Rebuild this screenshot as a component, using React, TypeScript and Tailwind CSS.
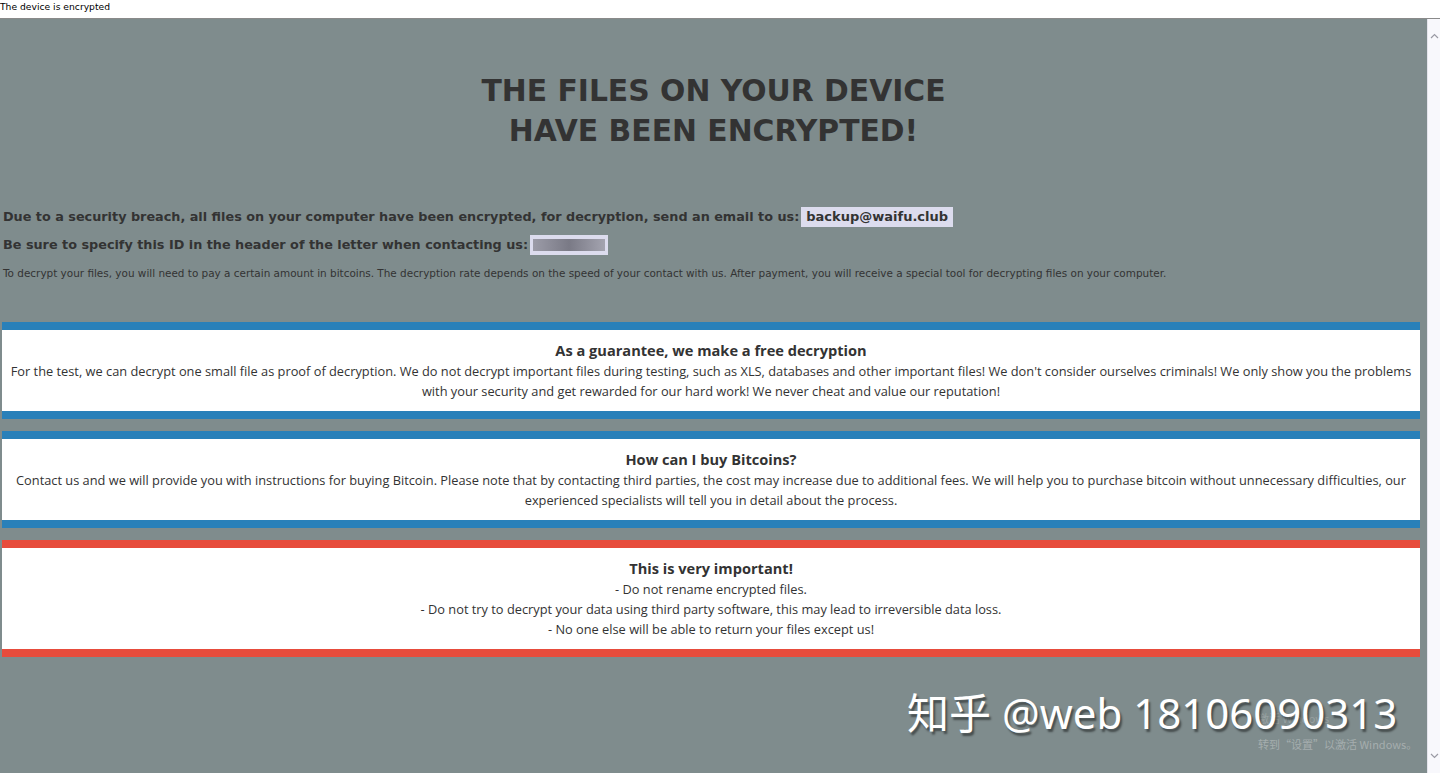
import React from 'react';

const tahoma = { fontFamily: '"DejaVu Sans", Verdana, sans-serif' };
const body = { fontFamily: '"Open Sans", "Noto Sans", sans-serif' };

function Box({ color, title, children }: { color: 'blue' | 'red'; title: string; children: React.ReactNode }) {
  const border = color === 'blue' ? 'border-[#2980b9]' : 'border-[#e74c3c]';
  return (
    <div className={`mx-[2px] w-[1418px] border-y-8 ${border} bg-white pt-[9px] pb-[10px] text-center text-[#333]`} style={body}>
      <div className="text-[14.6px] font-bold leading-[22px]">{title}</div>
      <div className="text-[12.8px] leading-[20px]">{children}</div>
    </div>
  );
}

export default function App() {
  return (
    <div className="h-[775px] w-[1440px] overflow-hidden bg-white" style={tahoma}>
      {/* title bar */}
      <div className="h-[19px] border-b border-[#8a8a8a] text-[9.2px] leading-[14px] text-black">The device is encrypted</div>

      <div className="flex h-[754px]">
        <div className="relative flex w-[1427px] flex-col bg-[#7f8c8d] text-[#333]">
          <h1 className="mt-[52px] text-center text-[29.8px] font-bold leading-[40px]">
            THE FILES ON YOUR DEVICE
            <br />
            HAVE BEEN ENCRYPTED!
          </h1>

          <div className="mt-[52px] pl-[3px]">
            <div className="flex items-center text-[12.8px] font-bold leading-[28px]">
              <span>Due to a security breach, all files on your computer have been encrypted, for decryption, send an email to us:</span>
              <span className="ml-[2px] bg-[#dcdcee] px-[5px] text-[13px] leading-[20px]">backup@waifu.club</span>
            </div>
            <div className="flex items-center text-[12.8px] font-bold leading-[28px]">
              <span>Be sure to specify this ID in the header of the letter when contacting us:</span>
              <span className="ml-[2px] flex h-[20px] w-[78px] items-center bg-[#dcdcee] px-[3px]">
                <span className="h-[12px] w-full bg-gradient-to-r from-[#9c9ca8] via-[#7a7a86] to-[#a4a4b0]" />
              </span>
            </div>
            <p className="text-[10.45px] leading-[28px]">
              To decrypt your files, you will need to pay a certain amount in bitcoins. The decryption rate depends on the speed of your contact with us. After payment, you will receive a special tool for decrypting files on your computer.
            </p>
          </div>

          <div className="mt-[35px] flex flex-col gap-[12px]">
            <Box color="blue" title="As a guarantee, we make a free decryption">
              For the test, we can decrypt one small file as proof of decryption. We do not decrypt important files during testing, such as XLS, databases and other important files! We don't consider ourselves criminals! We only show you the problems with your security and get rewarded for our hard work! We never cheat and value our reputation!
            </Box>
            <Box color="blue" title="How can I buy Bitcoins?">
              Contact us and we will provide you with instructions for buying Bitcoin. Please note that by contacting third parties, the cost may increase due to additional fees. We will help you to purchase bitcoin without unnecessary difficulties, our experienced specialists will tell you in detail about the process.
            </Box>
            <Box color="red" title="This is very important!">
              - Do not rename encrypted files.
              <br />- Do not try to decrypt your data using third party software, this may lead to irreversible data loss.
              <br />- No one else will be able to return your files except us!
            </Box>
          </div>

          {/* watermark / activation overlay */}
          <div className="absolute left-[1258px] top-[692px] text-[11px] leading-[14px] text-white/20" style={{ fontFamily: '"Noto Sans CJK SC", sans-serif' }}>
            激活 Windows
          </div>
          <div
            className="absolute left-[907px] top-[672px] whitespace-nowrap text-[42px] leading-[44px] text-white"
            style={{ fontFamily: '"Noto Sans", "Noto Sans CJK SC", sans-serif', textShadow: '2px 3px 2px rgba(0,0,0,0.45)' }}
          >
            知乎 @web 18106090313
          </div>
          <div className="absolute left-[1258px] top-[717px] text-[11px] leading-[16px] text-white/30" style={{ fontFamily: '"Noto Sans CJK SC", sans-serif' }}>
            转到“设置”以激活 Windows。
          </div>
        </div>

        {/* scrollbar */}
        <div className="flex w-[13px] flex-col items-center justify-between border-l border-[#e4e4ec] bg-[#f8f8fc] py-[14px] text-[#9a9aa4]">
          <svg width="9" height="6" viewBox="0 0 9 6"><path d="M1 5 L4.5 1.5 L8 5" fill="none" stroke="currentColor" strokeWidth="1.2" /></svg>
          <svg width="9" height="6" viewBox="0 0 9 6"><path d="M1 1 L4.5 4.5 L8 1" fill="none" stroke="currentColor" strokeWidth="1.2" /></svg>
        </div>
      </div>
      <div className="h-[2px] bg-white" />
    </div>
  );
}
